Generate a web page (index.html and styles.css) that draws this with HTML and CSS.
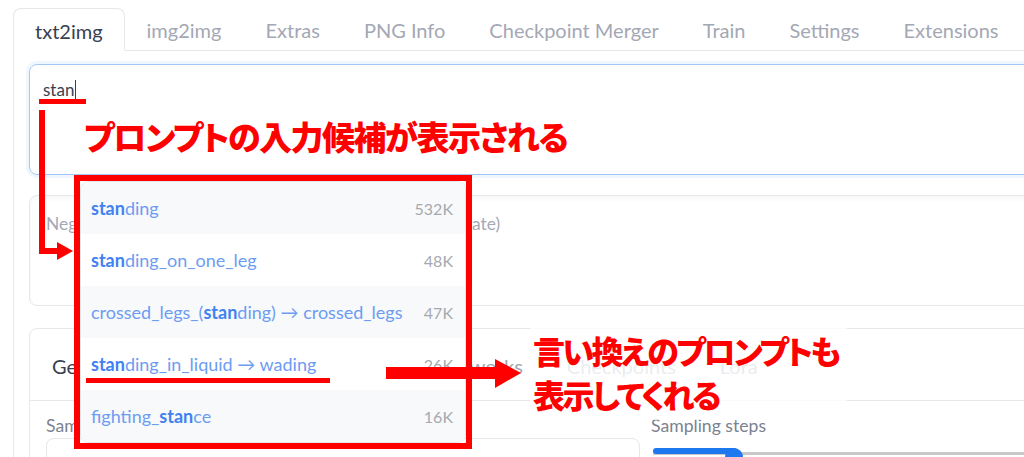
FILE: index.html
```html
<!DOCTYPE html>
<html>
<head>
    <title>txt2img</title>
    <link rel="stylesheet" href="styles.css">
</head>
<body>
    <div class="app">
        <nav class="tabs">
            <span class="tab tab-active">txt2img</span>
            <span class="tab">img2img</span>
            <span class="tab">Extras</span>
            <span class="tab">PNG Info</span>
            <span class="tab">Checkpoint Merger</span>
            <span class="tab">Train</span>
            <span class="tab">Settings</span>
            <span class="tab">Extensions</span>
        </nav>

        <div class="panel">
            <div class="prompt">stan<span class="caret"></span></div>
            <div class="neg-prompt">Negative prompt (press Ctrl+Enter or Alt+Enter to generate)</div>

            <div class="card">
                <nav class="subtabs">
                    <span class="subtab subtab-active">Generation</span>
                    <span class="subtab">Textual Inversion</span>
                    <span class="subtab">Hypernetworks</span>
                    <span class="subtab">Checkpoints</span>
                    <span class="subtab">Lora</span>
                </nav>
                <div class="settings">
                    <div class="setting-left">
                        <div class="setting-label">Sampling method</div>
                        <div class="select-box"></div>
                    </div>
                    <div class="setting-right">
                        <div class="setting-label">Sampling steps</div>
                        <div class="slider">
                            <div class="slider-fill"></div>
                            <div class="slider-thumb"></div>
                        </div>
                    </div>
                </div>
            </div>
        </div>

        <!-- autocomplete popup, framed in red -->
        <div class="suggest-frame">
            <ul class="suggest">
                <li class="suggest-row"><span class="tag"><b>stan</b>ding</span><span class="count">532K</span></li>
                <li class="suggest-row"><span class="tag"><b>stan</b>ding_on_one_leg</span><span class="count">48K</span></li>
                <li class="suggest-row"><span class="tag">crossed_legs_(<b>stan</b>ding) &#x2192; crossed_legs</span><span class="count">47K</span></li>
                <li class="suggest-row"><span class="tag"><b>stan</b>ding_in_liquid &#x2192; wading</span><span class="count">26K</span></li>
                <li class="suggest-row"><span class="tag">fighting_<b>stan</b>ce</span><span class="count">16K</span></li>
            </ul>
        </div>

        <!-- annotations -->
        <div class="note note-top">プロンプトの入力候補が表示される</div>
        <div class="note note-side">言い換えのプロンプトも<br>表示してくれる</div>

        <svg class="marks" width="1024" height="457" viewBox="0 0 1024 457">
            <rect x="39" y="99" width="47" height="5" fill="#ff0000"/>
            <rect x="39" y="110" width="6" height="144" fill="#ff0000"/>
            <rect x="39" y="248" width="20" height="6" fill="#ff0000"/>
            <polygon points="57,242 73,251 57,260" fill="#ff0000"/>
            <rect x="86" y="378" width="244" height="5" fill="#ff0000"/>
            <rect x="386" y="367" width="111" height="12" fill="#ff0000"/>
            <polygon points="495,359 521,373 495,388" fill="#ff0000"/>
        </svg>
    </div>
</body>
</html>
```

FILE: styles.css
```css
body {
    margin: 0;
    font-family: Lato, 'Noto Sans', sans-serif;
    background-color: #ffffff;
    overflow: hidden;
}

.app {
    position: relative;
    width: 1100px;
    padding-top: 8px;
}

.tabs {
    display: flex;
    margin-left: 13px;
    border-bottom: 1px solid #e5e7eb;
}

.tab {
    padding: 0 22px;
    height: 41px;
    line-height: 44px;
    font-size: 20px;
    color: #a3a8b4;
    white-space: nowrap;
}

.tab-active {
    padding: 0 21px;
    border: 1px solid #e5e7eb;
    border-bottom-color: #ffffff;
    border-radius: 8px 8px 0 0;
    margin-bottom: -1px;
    background-color: #ffffff;
    color: #374151;
}

.panel {
    margin-left: 13px;
    border-left: 1px solid #e5e7eb;
    padding: 13px 0 0 15px;
}

.prompt {
    box-sizing: border-box;
    height: 111px;
    padding: 14px 13px;
    border: 1px solid #a4c8f6;
    border-radius: 8px;
    box-shadow: 0 0 0 3px #f0f6fe;
    font-size: 17px;
    color: #374151;
}

.caret {
    display: inline-block;
    width: 1px;
    height: 20px;
    margin-left: 1px;
    vertical-align: -4px;
    background-color: #374151;
}

.neg-prompt {
    box-sizing: border-box;
    height: 111px;
    margin-top: 20px;
    padding: 17px 16px;
    border: 1px solid #e5e7eb;
    border-radius: 8px;
    box-shadow: inset 0 3px 4px rgba(0, 0, 0, 0.03);
    font-size: 17.4px;
    color: #a3a8b4;
}

.card {
    height: 200px;
    margin-top: 22px;
    padding-top: 12px;
    border: 1px solid #e5e7eb;
    border-radius: 8px;
}

.subtabs {
    display: flex;
    height: 59px;
    border-bottom: 1px solid #e5e7eb;
}

.subtab {
    padding: 12px 22px 0;
    font-size: 20px;
    line-height: 26px;
    color: #a3a8b4;
    white-space: nowrap;
}

.subtab-active {
    color: #374151;
}

.settings {
    display: flex;
    gap: 11px;
    padding: 14px 16px 0;
}

.setting-left {
    width: 594px;
}

.setting-right {
    flex: 1;
}

.setting-label {
    font-size: 17.6px;
    line-height: 22px;
    color: #7b8291;
}

.select-box {
    height: 40px;
    margin-top: 1px;
    border: 1px solid #e5e7eb;
    border-radius: 8px;
}

.slider {
    position: relative;
    height: 18px;
    margin: 11px 0 0 2px;
    background: linear-gradient(#ffffff 0 4px, #c8c8c8 4px 7px, #ffffff 7px);
}

.slider-fill {
    width: 84px;
    height: 6px;
    margin-top: 3px;
    border-radius: 3px;
    background-color: #1e78f0;
}

.slider-thumb {
    position: absolute;
    left: 72px;
    top: 0;
    width: 18px;
    height: 18px;
    border-radius: 50%;
    background-color: #1e78f0;
}

.suggest-frame {
    position: absolute;
    left: 74px;
    top: 175px;
    width: 386px;
    border: 6px solid #ff0000;
}

.suggest {
    list-style: none;
    margin: 0;
    padding: 0;
    border: 1px solid #e5e7eb;
    border-radius: 8px;
    overflow: hidden;
    background-color: #ffffff;
}

.suggest-row {
    display: flex;
    justify-content: space-between;
    align-items: center;
    height: 52px;
    padding: 0 12px 0 10px;
    font-size: 18px;
    color: #6d9cf3;
}

.suggest-row:nth-child(odd) {
    background-color: #f8f9fb;
}

.suggest-row b {
    color: #3f82ef;
}

.count {
    font-size: 16px;
    color: #a6a9ae;
}

.note {
    position: absolute;
    font-family: 'Noto Sans CJK JP', sans-serif;
    font-weight: 900;
    color: #ff0000;
    font-feature-settings: "palt";
    white-space: nowrap;
}

.note-top {
    left: 84px;
    top: 116px;
    font-size: 33px;
    line-height: 40px;
    letter-spacing: -1.5px;
}

.note-side {
    left: 530px;
    top: 328px;
    padding: 0 8px 4px 3px;
    font-size: 32px;
    line-height: 44px;
    letter-spacing: -2.5px;
    background-color: rgba(255, 255, 255, 0.78);
}

.marks {
    position: absolute;
    left: 0;
    top: 0;
}
```
